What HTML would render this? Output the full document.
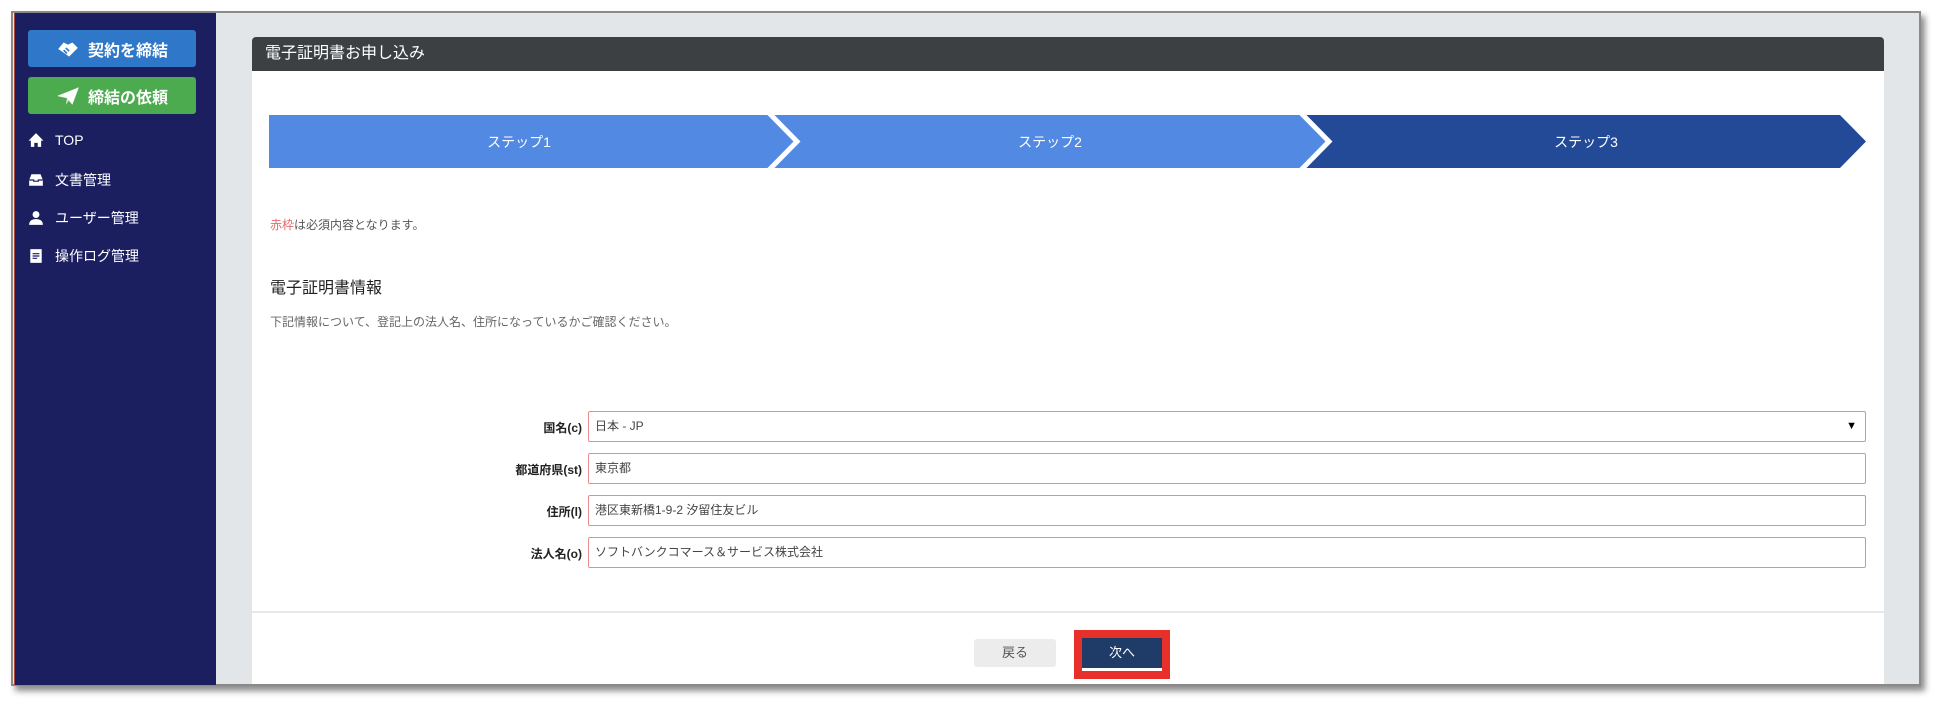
<!DOCTYPE html>
<html><head><meta charset="utf-8"><style>
*{box-sizing:border-box;margin:0;padding:0}
body{width:1936px;height:702px;background:#fff;position:relative;overflow:hidden;font-family:"Liberation Sans","Noto Sans CJK JP",sans-serif}
.frame{position:absolute;left:11px;top:11px;width:1910px;height:675px;background:#e2e6e9;border:2px solid #8a8a8a;box-shadow:4px 5px 6px rgba(0,0,0,.45)}
.side{position:absolute;left:14px;top:13px;width:202px;height:672px;background:#1b1f60;border-left:1px solid #b04a3a}
.btn{position:absolute;left:13px;width:168px;height:37px;border-radius:3px;color:#fff;font-weight:bold;font-size:16px;display:flex;align-items:center;justify-content:center;gap:8px}
.nav{position:absolute;left:13px;color:#fff;font-size:14px;display:flex;align-items:center;gap:11px}
.nav svg{width:16px;height:16px}
.card{position:absolute;left:252px;top:37px;width:1632px;height:647px;background:#fff;border-radius:4px 4px 0 0}
.hdr{height:34px;background:#3c4043;border-radius:4px 4px 0 0;color:#fff;font-size:16px;line-height:34px;padding-left:13px}
.step{position:absolute;top:115px;height:53px;color:#fff;font-size:14px;display:flex;align-items:center;justify-content:center}
.lbl{position:absolute;font-size:12px;font-weight:bold;color:#222;text-align:right;width:200px}
.inp{position:absolute;left:588px;width:1278px;height:31px;border:1.5px solid #e88c8c;border-radius:2px;font-size:12px;color:#444;padding-left:6px;line-height:28px}
</style></head><body>
<div class="frame"></div>
<div class="side">
 <div class="btn" style="top:17px;background:#2f77c8">
  <svg width="24" height="20" viewBox="0 0 22 18"><path d="M2 9l5-6 4 2 4-2 5 5-8 8-4-3z" fill="#fff"/><path d="M7 10l3 3M9 8l3 3" stroke="#2f77c8" stroke-width="1.5"/></svg>契約を締結</div>
 <div class="btn" style="top:64px;background:#4caa4f">
  <svg width="24" height="20" viewBox="0 0 22 18"><path d="M1 9L21 1 15 17 10 11z" fill="#fff"/><path d="M10 11l-1 6 3-4" fill="#ddd"/></svg>締結の依頼</div>
 <div class="nav" style="top:119px"><svg viewBox="0 0 14 14"><path d="M0.5 7.5L7 1l6.5 6.5h-2v5.5H8.5V9.5h-3V13H2.5V7.5z" fill="#fff"/></svg>TOP</div>
 <div class="nav" style="top:157px"><svg viewBox="0 0 14 14"><path d="M3 2h8l2 5v5H1V7z" fill="#fff"/><path d="M1 7h4v1h4V7h4" stroke="#1b1f60" stroke-width="1" fill="none"/></svg>文書管理</div>
 <div class="nav" style="top:195px"><svg viewBox="0 0 14 14"><circle cx="7" cy="4" r="3" fill="#fff"/><path d="M1 13c0-4 3-5 6-5s6 1 6 5z" fill="#fff"/></svg>ユーザー管理</div>
 <div class="nav" style="top:233px"><svg viewBox="0 0 14 14"><rect x="2" y="1" width="10" height="12" fill="#fff"/><path d="M4 5h6M4 7h6M4 9h4" stroke="#1b1f60"/></svg>操作ログ管理</div>
</div>
<div class="card">
 <div class="hdr">電子証明書お申し込み</div>
 <div style="position:absolute;left:18px;top:179px;font-size:12px;color:#555"><span style="color:#e36b6b">赤枠</span>は必須内容となります。</div>
 <div style="position:absolute;left:18px;top:237px;font-size:16px;color:#222">電子証明書情報</div>
 <div style="position:absolute;left:18px;top:276px;font-size:12px;color:#666">下記情報について、登記上の法人名、住所になっているかご確認ください。</div>
 <div style="position:absolute;left:0;top:574px;width:100%;height:2px;background:#e8e8e8"></div>
</div>
<svg style="position:absolute;left:0;top:0" width="1936" height="702">
 <polygon points="269,115 1840,115 1866,141.5 1840,168 269,168" fill="#224a97"/>
 <polygon points="269,115 1302,115 1329,141.5 1302,168 269,168" fill="#5289e3"/>
 <polyline points="769,113 797,141.5 769,170" fill="none" stroke="#fff" stroke-width="5"/>
 <polyline points="1301,113 1329,141.5 1301,170" fill="none" stroke="#fff" stroke-width="5"/>
</svg>
<div class="step" style="left:269px;width:500px">ステップ1</div>
<div class="step" style="left:800px;width:500px">ステップ2</div>
<div class="step" style="left:1332px;width:508px">ステップ3</div>
<div class="lbl" style="left:382px;top:419px">国名(c)</div>
<div class="lbl" style="left:382px;top:461px">都道府県(st)</div>
<div class="lbl" style="left:382px;top:503px">住所(l)</div>
<div class="lbl" style="left:382px;top:545px">法人名(o)</div>
<div class="inp" style="top:411px">日本 - JP<span style="position:absolute;right:8px;top:0;font-size:11px;color:#000">▼</span></div>
<div class="inp" style="top:453px">東京都</div>
<div class="inp" style="top:495px">港区東新橋1-9-2 汐留住友ビル</div>
<div class="inp" style="top:537px">ソフトバンクコマース＆サービス株式会社</div>
<div style="position:absolute;left:974px;top:639px;width:82px;height:28px;background:#ececec;border-radius:3px;color:#555;font-size:13px;text-align:center;line-height:28px">戻る</div>
<div style="position:absolute;left:1074px;top:630px;width:96px;height:49px;background:#e8302a"></div>
<div style="position:absolute;left:1082px;top:638px;width:80px;height:33px;background:#fff"></div>
<div style="position:absolute;left:1082px;top:638px;width:80px;height:30px;background:#1f3b68;color:#fff;font-size:13px;text-align:center;line-height:30px">次へ</div>
</body></html>
